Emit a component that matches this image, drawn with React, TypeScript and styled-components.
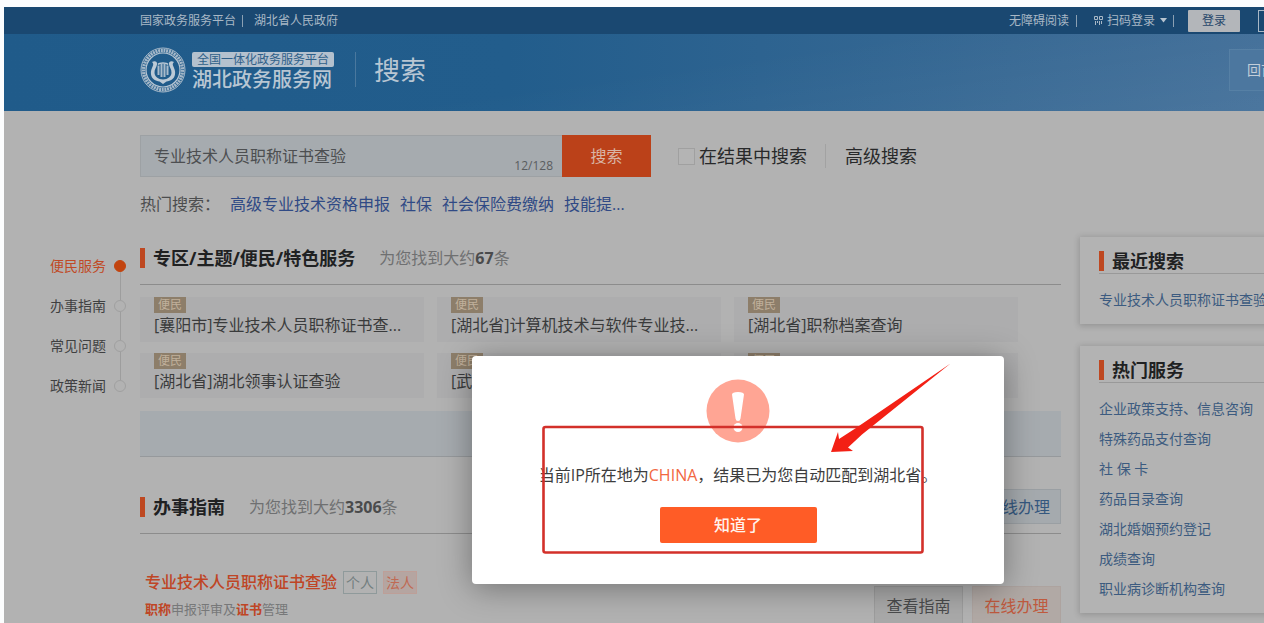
import React from 'react';
import styled, { createGlobalStyle } from 'styled-components';

const GlobalStyle = createGlobalStyle`
  *, *::before, *::after { box-sizing: border-box; }
  html, body { height: 100%; margin: 0; overflow: hidden; }
  body {
    background: #fcfdfe;
    color: #333435;
    font-family: "Open Sans", "Noto Sans CJK SC", sans-serif;
    font-size: 16px;
    line-height: 24px;
  }
  h1, h2, h3, p, ul { margin: 0; padding: 0; }
  ul { list-style: none; }
  a { color: inherit; text-decoration: none; white-space: nowrap; }
  button, input { font: inherit; margin: 0; padding: 0; border: 0; border-radius: 0; }
`;

const Page = styled.div`
  margin: 7px 0 0 4px;
  min-height: 100vh;
  background: #b2b2b2;
  overflow: hidden;
`;

const TopBar = styled.div`
  display: flex;
  align-items: center;
  justify-content: space-between;
  height: 27px;
  padding-left: 136px;
  background: #1a4871;
  color: #a9b8c6;
  font-size: 12px;
  line-height: 20px;
`;

const TopGroup = styled.div`
  display: flex;
  align-items: center;
  flex: none;
`;

const Bar = styled.span<{ $left: number; $right: number }>`
  width: 1px;
  height: 12px;
  margin: 0 ${p => p.$right}px 0 ${p => p.$left}px;
  background: #8ba0b3;
`;

const ScanLink = styled.a`
  display: flex;
  align-items: center;
  gap: 4px;
`;

const LoginButton = styled.button`
  width: 52px;
  height: 22px;
  border-radius: 1px;
  background: #b3b6ba;
  color: #27476a;
`;

const RegisterButton = styled.button`
  width: 52px;
  height: 22px;
  margin: 0 -46px 0 18px;
  border: 1px solid #a9b8c6;
  background: transparent;
  color: #a9b8c6;
`;

const Header = styled.header`
  display: flex;
  align-items: center;
  justify-content: space-between;
  height: 77px;
  padding: 0 0 6px 136px;
  background: linear-gradient(172deg, rgba(255, 255, 255, 0) 50%, rgba(255, 255, 255, 0.05)),
    linear-gradient(90deg, #205b8a, #225d8c 40%, #386994 80%, #426f99);
  color: #b8c6d3;
`;

const Brand = styled.a`
  display: flex;
  align-items: center;
  gap: 6px;
`;

const BrandText = styled.span`
  display: flex;
  flex-direction: column;
  padding-top: 5px;
`;

const BrandBadge = styled.span`
  padding: 0 5px;
  border-radius: 2px;
  background: #b4c1ce;
  color: #2f6089;
  font-size: 12px;
  line-height: 15px;
`;

const BrandName = styled.span`
  font-size: 20px;
  font-weight: 500;
  line-height: 26px;
`;

const HeaderDivider = styled.span`
  width: 1px;
  height: 35px;
  margin: 0 18px 0 21px;
  background: #4a789e;
`;

const HeaderTitle = styled.h1`
  font-size: 26px;
  font-weight: 400;
  line-height: 36px;
`;

const HomeButton = styled.button`
  width: 96px;
  height: 42px;
  margin-right: -61px;
  padding-left: 17px;
  border: 1px solid #5680a5;
  background: #4c779f;
  color: #c3ced9;
  font-size: 14px;
  text-align: left;
`;

const SearchArea = styled.form`
  padding: 24px 0 0 136px;
`;

const SearchRow = styled.div`
  display: flex;
  align-items: center;
`;

const SearchField = styled.label`
  display: flex;
  align-items: center;
  flex: none;
  width: 422px;
  height: 42px;
  padding: 0 9px 0 13px;
  border: 1px solid #9da1a4;
  border-right: 0;
  background: #a6abaf;
`;

const SearchInput = styled.input`
  flex: 1;
  min-width: 0;
  background: transparent;
  color: #4d4f51;
  outline: none;
`;

const Counter = styled.span`
  align-self: flex-end;
  color: #5a5d60;
  font-size: 12px;
  line-height: 20px;
`;

const SearchButton = styled.button`
  width: 89px;
  height: 42px;
  background: #bb4119;
  color: #d9b5a6;
`;

const WithinLabel = styled.label`
  display: flex;
  align-items: center;
  gap: 4px;
  margin-left: 27px;
  color: #28292a;
  font-size: 18px;
`;

const Checkbox = styled.input`
  appearance: none;
  width: 17px;
  height: 17px;
  border: 1px solid #a0a0a0;
  background: #b4b4b4;
`;

const AdvancedLink = styled.a`
  margin-left: 18px;
  padding-left: 19px;
  border-left: 1px solid #a2a2a2;
  color: #28292a;
  font-size: 18px;
`;

const HotRow = styled.div`
  display: flex;
  gap: 10px;
  margin-top: 15px;
  color: #4c4d4e;
`;

const HotLink = styled.a`
  color: #304a85;
`;

const Layout = styled.div`
  display: flex;
  align-items: flex-start;
  padding-top: 21px;
`;

const SideNav = styled.nav`
  flex: none;
  width: 136px;
  padding: 9px 14px 0 46px;
`;

const SideItem = styled.a<{ $active?: boolean }>`
  display: flex;
  align-items: center;
  justify-content: space-between;
  height: 40px;
  color: ${p => (p.$active ? '#c04a26' : '#3f4041')};
  font-size: 14px;
`;

const Dot = styled.span<{ $active?: boolean }>`
  position: relative;
  width: 12px;
  height: 12px;
  border: 1px solid ${p => (p.$active ? '#c2440f' : '#a0a0a0')};
  border-radius: 50%;
  background: ${p => (p.$active ? '#c2440f' : '#b2b2b2')};

  ${SideItem}:not(:last-child) &::after {
    content: '';
    position: absolute;
    top: 11px;
    left: 5px;
    width: 1px;
    height: 28px;
    background: #9d9d9d;
  }
`;

const Main = styled.main`
  flex: 1;
  min-width: 0;
`;

const SectionHead = styled.div<{ $top: number }>`
  display: flex;
  align-items: center;
  height: 54px;
  margin-top: ${p => p.$top}px;
  border-bottom: 1px solid #8c8c8c;
`;

const SectionTitle = styled.h2`
  display: flex;
  align-items: center;
  gap: 8px;
  color: #202122;
  font-size: 18px;
  font-weight: 700;
  line-height: 24px;

  &::before {
    content: '';
    width: 5px;
    height: 20px;
    background: #be4821;
  }
`;

const Found = styled.p`
  margin-left: 24px;
  color: #6f7071;

  strong { color: #4a4b4c; }
`;

const Cards = styled.div`
  display: grid;
  grid-template-columns: repeat(3, 1fr);
  gap: 11px 13px;
  margin: 12px 43px 0 0;
`;

const Card = styled.a`
  display: flex;
  flex-direction: column;
  align-items: flex-start;
  height: 45px;
  padding-left: 14px;
  background: #adadae;
  color: #3a3b3c;
`;

const CardTag = styled.span`
  padding: 0 4px;
  background: #8d7e6a;
  color: #c0b09b;
  font-size: 12px;
  line-height: 16px;
`;

const Band = styled.div`
  height: 46px;
  margin-top: 13px;
  border-bottom: 1px solid #96999c;
  background: #a6abaf;
`;

const OnlineButton = styled.button`
  width: 86px;
  height: 35px;
  margin-left: auto;
  border: 1px solid #9a9fa3;
  background: #a5aaae;
  color: #35587f;
`;

const Result = styled.article`
  display: flex;
  align-items: flex-start;
  justify-content: space-between;
  padding: 36px 0 0 5px;
`;

const ResultTitle = styled.h3`
  display: flex;
  align-items: center;
  gap: 6px;
  color: #bf4525;
  font-size: 16px;
  font-weight: 500;
`;

const Kind = styled.span<{ $warm?: boolean }>`
  padding: 0 2px;
  border: 1px solid ${p => (p.$warm ? '#bd9f98' : '#8f9a9b')};
  background: ${p => (p.$warm ? '#b5a5a1' : 'transparent')};
  color: ${p => (p.$warm ? '#c06a54' : '#737e7f')};
  font-size: 14px;
  font-weight: 400;
  line-height: 21px;
`;

const ResultNote = styled.p`
  margin-top: 4px;
  color: #777879;
  font-size: 13px;
  line-height: 22px;

  em { color: #bf4525; font-style: normal; font-weight: 700; }
`;

const Actions = styled.div`
  display: flex;
  gap: 9px;
  padding-top: 16px;
`;

const ActionButton = styled.button<{ $warm?: boolean }>`
  width: 89px;
  height: 40px;
  border: 1px solid ${p => (p.$warm ? '#ada39f' : '#9d9d9d')};
  background: ${p => (p.$warm ? '#b1a9a5' : '#a9a9a9')};
  color: ${p => (p.$warm ? '#bf5a3e' : '#4a4b4c')};
`;

const Aside = styled.aside`
  flex: none;
  display: flex;
  flex-direction: column;
  gap: 22px;
  width: 184px;
  margin-left: 19px;
`;

const Panel = styled.section`
  margin-right: -71px;
  padding: 12px 19px 9px;
  background: #b3b3b3;
  box-shadow: 0 1px 6px 1px rgba(0, 0, 0, 0.17);
`;

const PanelHead = styled.div`
  border-bottom: 1px solid #999999;
`;

const PanelList = styled.ul`
  padding-top: 11px;
  color: #3c5b80;
  font-size: 14px;
  line-height: 30px;
`;

const Dialog = styled.div`
  position: absolute;
  z-index: 2;
  top: 356px;
  left: calc(50% + 106px);
  transform: translateX(-50%);
  display: flex;
  flex-direction: column;
  align-items: center;
  width: 532px;
  padding: 23px 0 41px;
  border-radius: 4px;
  background: #ffffff;
  box-shadow: 0 4px 32px rgba(0, 0, 0, 0.36);
`;

const DialogText = styled.p`
  margin: 20px 0;
  color: #3d3d3d;
  white-space: nowrap;

  span { color: #f2673f; }
`;

const ConfirmButton = styled.button`
  width: 157px;
  height: 36px;
  border-radius: 2px;
  background: #ff5c26;
  color: #fff3ec;
  font-weight: 500;
`;

const Markup = styled.svg`
  position: absolute;
  top: 0;
  left: 0;
  pointer-events: none;
`;

const navItems = ['便民服务', '办事指南', '常见问题', '政策新闻'];
const hotWords = ['高级专业技术资格申报', '社保', '社会保险费缴纳', '技能提...'];
const cards = [
  '[襄阳市]专业技术人员职称证书查...',
  '[湖北省]计算机技术与软件专业技...',
  '[湖北省]职称档案查询',
  '[湖北省]湖北领事认证查验',
  '[武汉市]职称证书查询',
  '[湖北省]证书查询',
];
const hotServices = [
  '企业政策支持、信息咨询',
  '特殊药品支付查询',
  '社 保 卡',
  '药品目录查询',
  '湖北婚姻预约登记',
  '成绩查询',
  '职业病诊断机构查询',
];

function Emblem() {
  return (
    <svg width="46" height="46" viewBox="0 0 46 46" fill="none" aria-hidden="true">
      <circle cx="23" cy="23" r="22" stroke="#a9bbcb" strokeWidth="1" />
      <circle cx="23" cy="23" r="19.500" stroke="#a4b7c8" strokeWidth="3.400" strokeDasharray="2 .7" />
      <circle cx="23" cy="23" r="17" stroke="#b9c7d4" strokeWidth="1.200" />
      <path
        d="M12 15c3-1.500 5.500-.3 5 2.500-.4 2.500-2.800 5-2.500 8.500.3 3.500 3.500 6.500 8.500 6.500s8.200-3 8.500-6.500c.3-3.500-2.100-6-2.500-8.500-.5-2.800 2-4 5-2.500-1 1-1.600 1.800-1 3.500 1.500 3.500 2.500 5.500 2 9-.7 4.500-4.500 6.500-8.500 7l-3.500 2.500-3.500-2.500c-4-.5-7.800-2.500-8.500-7-.5-3.500.5-5.500 2-9 .6-1.700 0-2.500-1-3.500z"
        fill="#bccad6"
      />
      <path d="M18.500 18.500v9.500M21.500 17v13M24.500 17v13M27.500 18.500v9.500" stroke="#a9bbcb" strokeWidth="2" />
      <path d="M18 17.500c1.500-2 8.500-2 10 0" stroke="#bccad6" strokeWidth="1.500" />
    </svg>
  );
}

function QrIcon() {
  return (
    <svg width="9" height="10" viewBox="0 0 9 10" fill="none" stroke="#a9b8c6" aria-hidden="true">
      <path d="M.5 .5h3v3h-3zM5.500 .5h3v3h-3zM1.500 5v4M3.500 5v2M5.500 5v4M7.500 5v3" />
    </svg>
  );
}

function Warning() {
  return (
    <svg width="64" height="64" viewBox="0 0 64 64" aria-hidden="true">
      <circle cx="32" cy="32" r="31.500" fill="#ffa594" />
      <path d="M26 15.500q0-2.500 6-2.500t6 2.500l-3.500 24q-.3 2.500-2.500 2.500t-2.500-2.500z" fill="#fff" />
      <ellipse cx="32" cy="48.500" rx="4.500" ry="4.500" fill="#fff" />
    </svg>
  );
}

export default function App() {
  return (
    <>
      <GlobalStyle />
      <Page>
        <TopBar>
          <TopGroup>
            <a href="#platform">国家政务服务平台</a>
            <Bar $left={6} $right={11} />
            <a href="#province">湖北省人民政府</a>
          </TopGroup>
          <TopGroup>
            <a href="#accessible">无障碍阅读</a>
            <Bar $left={7} $right={17} />
            <ScanLink href="#scan">
              <QrIcon />
              扫码登录
              <svg width="9" height="5" viewBox="0 0 9 5" aria-hidden="true">
                <path d="M1 0h7L4.500 4.500z" fill="#b7c4d0" />
              </svg>
            </ScanLink>
            <Bar $left={5} $right={14} />
            <LoginButton type="button">登录</LoginButton>
            <RegisterButton type="button">注册</RegisterButton>
          </TopGroup>
        </TopBar>

        <Header>
          <TopGroup>
            <Brand href="#home">
              <Emblem />
              <BrandText>
                <BrandBadge>全国一体化政务服务平台</BrandBadge>
                <BrandName>湖北政务服务网</BrandName>
              </BrandText>
            </Brand>
            <HeaderDivider />
            <HeaderTitle>搜索</HeaderTitle>
          </TopGroup>
          <HomeButton type="button">回首页</HomeButton>
        </Header>

        <SearchArea onSubmit={e => e.preventDefault()}>
          <SearchRow>
            <SearchField>
              <SearchInput aria-label="搜索" defaultValue="专业技术人员职称证书查验" maxLength={128} />
              <Counter>12/128</Counter>
            </SearchField>
            <SearchButton type="submit">搜索</SearchButton>
            <WithinLabel>
              <Checkbox type="checkbox" />
              在结果中搜索
            </WithinLabel>
            <AdvancedLink href="#advanced">高级搜索</AdvancedLink>
          </SearchRow>
          <HotRow>
            <span>热门搜索：</span>
            {hotWords.map(word => (
              <HotLink key={word} href="#hot">{word}</HotLink>
            ))}
          </HotRow>
        </SearchArea>

        <Layout>
          <SideNav>
            {navItems.map((item, i) => (
              <SideItem key={item} href="#section" $active={i === 0}>
                {item}
                <Dot $active={i === 0} />
              </SideItem>
            ))}
          </SideNav>

          <Main>
            <SectionHead $top={-6}>
              <SectionTitle>专区/主题/便民/特色服务</SectionTitle>
              <Found>为您找到大约<strong>67</strong>条</Found>
            </SectionHead>
            <Cards>
              {cards.map(text => (
                <Card key={text} href="#service">
                  <CardTag>便民</CardTag>
                  {text}
                </Card>
              ))}
            </Cards>
            <Band />
            <SectionHead $top={23}>
              <SectionTitle>办事指南</SectionTitle>
              <Found>为您找到大约<strong>3306</strong>条</Found>
              <OnlineButton type="button">在线办理</OnlineButton>
            </SectionHead>
            <Result>
              <div>
                <ResultTitle>
                  <a href="#result">专业技术人员职称证书查验</a>
                  <Kind>个人</Kind>
                  <Kind $warm>法人</Kind>
                </ResultTitle>
                <ResultNote><em>职称</em>申报评审及<em>证书</em>管理</ResultNote>
              </div>
              <Actions>
                <ActionButton type="button">查看指南</ActionButton>
                <ActionButton type="button" $warm>在线办理</ActionButton>
              </Actions>
            </Result>
          </Main>

          <Aside>
            <Panel>
              <PanelHead><SectionTitle>最近搜索</SectionTitle></PanelHead>
              <PanelList>
                <li><a href="#recent">专业技术人员职称证书查验</a></li>
              </PanelList>
            </Panel>
            <Panel>
              <PanelHead><SectionTitle>热门服务</SectionTitle></PanelHead>
              <PanelList>
                {hotServices.map(item => (
                  <li key={item}><a href="#hot-service">{item}</a></li>
                ))}
              </PanelList>
            </Panel>
          </Aside>
        </Layout>
      </Page>

      <Dialog role="dialog" aria-modal="true" aria-labelledby="notice">
        <Warning />
        <DialogText id="notice">
          当前IP所在地为<span>CHINA</span>，结果已为您自动匹配到湖北省。
        </DialogText>
        <ConfirmButton type="button">知道了</ConfirmButton>
        <Markup width="532" height="228" viewBox="0 0 532 228" aria-hidden="true">
          <rect x="71.500" y="71" width="379" height="125.500" rx="2" fill="none" stroke="#d3302a" strokeWidth="2.600" />
          <path d="M478.500 7.500L384 72l-17 11-1-7-7 20 22-1-5-3.500 14-13z" fill="#f32015" />
        </Markup>
      </Dialog>
    </>
  );
}
